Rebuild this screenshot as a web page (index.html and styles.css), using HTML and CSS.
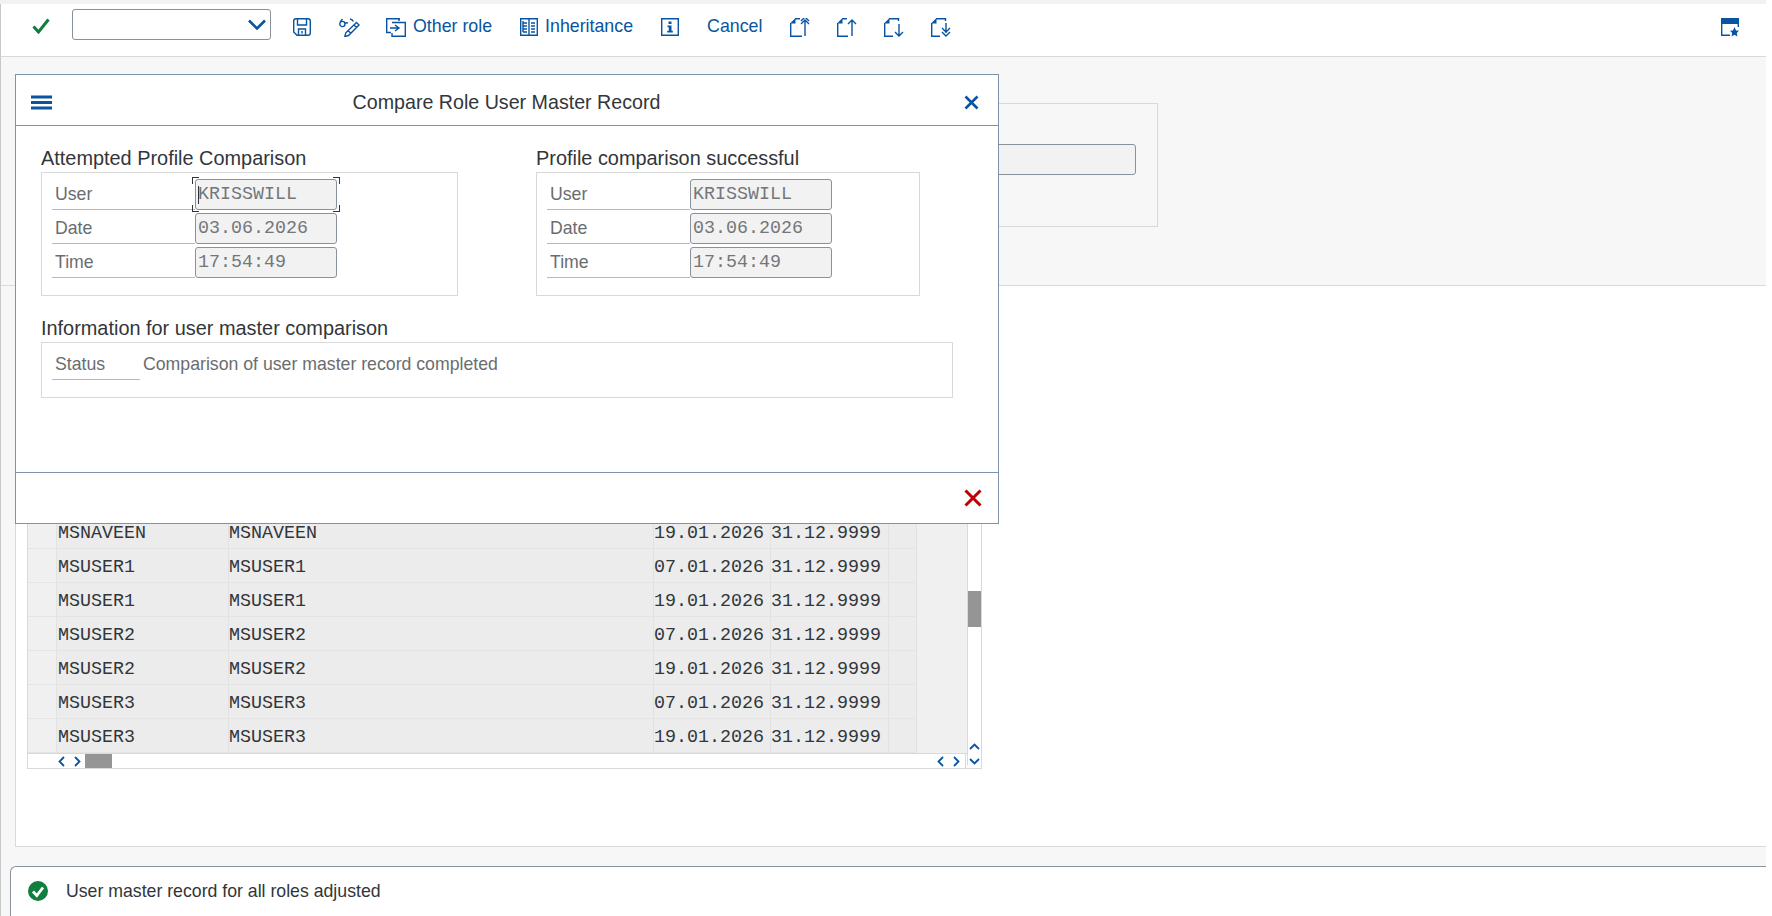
FILE: index.html
```html
<!DOCTYPE html>
<html lang="en">
<head>
    <meta charset="UTF-8">
    <title>Compare Role User Master Record</title>
    <link rel="stylesheet" href="styles.css">
</head>
<body>
    <div class="top-strip"></div>

    <div class="toolbar">
        <svg class="icon check" width="18" height="16" viewBox="0 0 18 16"><path d="M1.5 8.5 L6.5 14 L16.5 1.5"/></svg>
        <div class="dropdown">
            <svg class="icon" width="18" height="11" viewBox="0 0 18 11"><path d="M1 1.5 L9 9.5 L17 1.5" stroke-width="2.6"/></svg>
        </div>
        <svg class="icon save" width="18" height="18" viewBox="0 0 18 18"><path d="M3 .7 H15 Q17.3 .7 17.3 3 V15 Q17.3 17.3 15 17.3 H4 L.7 14 V3 Q.7 .7 3 .7 Z M4.5 1 V7 H13.5 V1 M5.5 17 V11 H12.5 V17 M9 13 V15.5"/></svg>
        <svg class="icon edit" width="21" height="19" viewBox="0 0 21 19"><path d="M3.5 1 C1.8 2.5 .8 4.5 .8 6 A2.6 2.6 0 0 0 6 6 A2.6 2.6 0 0 0 .8 6 M6 5.5 C7 4.5 8 4.5 9 5.2 M11 1 C12.5 1.2 13.8 2 14.5 3.5 M17.5 4.5 L20 7 L9.5 17.5 L5.8 18.5 L6.8 14.8 Z M15 7 L17.5 9.5 M9 12.5 L11.5 15"/></svg>
        <span class="tool-btn other-role">
            <svg class="icon" width="20" height="19" viewBox="0 0 20 19"><path d="M14 .7 H.7 V14.5 H5 M6 4.5 H19.3 V18.3 H6 V15 M13 .7 V3 M9 7 L13 10 L9 13 M4 10 H13"/></svg>
            Other role
        </span>
        <span class="tool-btn inherit">
            <svg class="icon" width="18" height="18" viewBox="0 0 18 18"><path d="M.7 .7 H17.3 V17.3 H.7 Z M9 .7 V17.3 M3 5 H7 M3 8 H7 M3 11 H7 M3 14 H7 M11 5 H15 M11 8 H15 M11 11 H15 M11 14 H15 M3 3 V14"/></svg>
            Inheritance
        </span>
        <svg class="icon info" width="18" height="18" viewBox="0 0 18 18"><path d="M.7 .7 H17.3 V17.3 H.7 Z"/><path class="solid" d="M7.5 3.5 H10.5 V6 H7.5 Z M6.5 7.5 H10.5 V12.8 H11.8 V14.5 H6.2 V12.8 H7.8 V9.2 H6.5 Z"/></svg>
        <span class="tool-btn cancel">Cancel</span>
        <div class="page-icons">
            <svg class="icon" width="21" height="19" viewBox="0 0 21 19"><path class="solid" d="M0 5.5 L5.5 0 V5.5 Z"/><path d="M.7 5 V18.3 H12 M5 .7 H10 M15 18 V3 M11 6 L15 2 L19 6 M11 3 L15 -1 L19 3"/></svg>
            <svg class="icon" width="21" height="19" viewBox="0 0 21 19"><path class="solid" d="M0 5.5 L5.5 0 V5.5 Z"/><path d="M.7 5 V18.3 H11 M5 .7 H10 M15 18 V2 M11 6 L15 2 L19 6"/></svg>
            <svg class="icon" width="21" height="19" viewBox="0 0 21 19"><path class="solid" d="M0 5.5 L5.5 0 V5.5 Z"/><path d="M.7 5 V18.3 H9 M5 .7 H14.5 V3 M15 6 V18 M11 14 L15 18 L19 14"/></svg>
            <svg class="icon" width="21" height="19" viewBox="0 0 21 19"><path class="solid" d="M0 5.5 L5.5 0 V5.5 Z"/><path d="M.7 5 V18.3 H9 M5 .7 H14.5 V3 M15 5 V15 M11 10 L15 14 L19 10 M11 14 L15 18 L19 14"/></svg>
        </div>
        <svg class="icon layout" width="18" height="19" viewBox="0 0 18 19"><path class="solid" d="M0 0 H18 V6 H0 Z M13.5 9 L15 12.5 L18 12.7 L15.8 15 L16.5 18.5 L13.5 16.7 L10.5 18.5 L11.2 15 L9 12.7 L12 12.5 Z"/><path d="M.7 3 V17.3 H9 M17.3 3 V9"/></svg>
    </div>

    <div class="main">
        <div class="header-area">
            <div class="form-box">
                <div class="form-input"></div>
            </div>
        </div>

        <div class="work-area">
            <div class="table-wrap">
                <div class="table-body">
                    <div class="rows">
                        <div class="row"><span class="sel"></span><span class="c1">MSNAVEEN</span><span class="c2">MSNAVEEN</span><span class="c3">19.01.2026</span><span class="c4">31.12.9999</span><span class="c5"></span></div>
                        <div class="row"><span class="sel"></span><span class="c1">MSUSER1</span><span class="c2">MSUSER1</span><span class="c3">07.01.2026</span><span class="c4">31.12.9999</span><span class="c5"></span></div>
                        <div class="row"><span class="sel"></span><span class="c1">MSUSER1</span><span class="c2">MSUSER1</span><span class="c3">19.01.2026</span><span class="c4">31.12.9999</span><span class="c5"></span></div>
                        <div class="row"><span class="sel"></span><span class="c1">MSUSER2</span><span class="c2">MSUSER2</span><span class="c3">07.01.2026</span><span class="c4">31.12.9999</span><span class="c5"></span></div>
                        <div class="row"><span class="sel"></span><span class="c1">MSUSER2</span><span class="c2">MSUSER2</span><span class="c3">19.01.2026</span><span class="c4">31.12.9999</span><span class="c5"></span></div>
                        <div class="row"><span class="sel"></span><span class="c1">MSUSER3</span><span class="c2">MSUSER3</span><span class="c3">07.01.2026</span><span class="c4">31.12.9999</span><span class="c5"></span></div>
                        <div class="row"><span class="sel"></span><span class="c1">MSUSER3</span><span class="c2">MSUSER3</span><span class="c3">19.01.2026</span><span class="c4">31.12.9999</span><span class="c5"></span></div>
                    </div>
                    <div class="table-blank"></div>
                    <div class="vscroll">
                        <div class="vthumb"></div>
                        <svg class="icon chev" width="11" height="7" viewBox="0 0 11 7"><path d="M1 6 L5.5 1.5 L10 6"/></svg>
                        <svg class="icon chev" width="11" height="7" viewBox="0 0 11 7"><path d="M1 1 L5.5 5.5 L10 1"/></svg>
                    </div>
                </div>
                <div class="hscroll">
                    <svg class="icon chev" width="7" height="11" viewBox="0 0 7 11"><path d="M6 1 L1.5 5.5 L6 10"/></svg>
                    <svg class="icon chev" width="7" height="11" viewBox="0 0 7 11"><path d="M1 1 L5.5 5.5 L1 10"/></svg>
                    <div class="hthumb"></div>
                    <svg class="icon chev right-first" width="7" height="11" viewBox="0 0 7 11"><path d="M6 1 L1.5 5.5 L6 10"/></svg>
                    <svg class="icon chev" width="7" height="11" viewBox="0 0 7 11"><path d="M1 1 L5.5 5.5 L1 10"/></svg>
                </div>
            </div>
        </div>

        <div class="status-bar">
            <svg class="status-icon" width="22" height="22" viewBox="0 0 22 22"><circle cx="11" cy="11" r="10" fill="#107e3e"/><path d="M6 11.5 L9.8 15.5 L16 7.5" fill="none" stroke="#fff" stroke-width="2.8"/></svg>
            <span>User master record for all roles adjusted</span>
        </div>
    </div>

    <!-- popup over the screen -->
    <div class="dialog">
        <div class="dialog-head">
            <svg class="icon menu" width="21" height="15" viewBox="0 0 21 15"><path d="M0 2 H21 M0 7.5 H21 M0 13 H21" stroke-width="3"/></svg>
            <div class="dialog-title">Compare Role User Master Record</div>
            <svg class="icon close" width="15" height="15" viewBox="0 0 15 15"><path d="M1.5 1.5 L13.5 13.5 M13.5 1.5 L1.5 13.5" stroke-width="2.6"/></svg>
        </div>

        <div class="dialog-body">
            <div class="groups">
                <div class="group group-left">
                    <h3>Attempted Profile Comparison</h3>
                    <div class="group-box">
                        <div class="field"><label>User</label><div class="value focused">KRISSWILL<i class="cursor"></i><i class="corner tl"></i><i class="corner tr"></i><i class="corner bl"></i><i class="corner br"></i></div></div>
                        <div class="field"><label>Date</label><div class="value">03.06.2026</div></div>
                        <div class="field"><label>Time</label><div class="value">17:54:49</div></div>
                    </div>
                </div>
                <div class="group group-right">
                    <h3>Profile comparison successful</h3>
                    <div class="group-box">
                        <div class="field"><label>User</label><div class="value">KRISSWILL</div></div>
                        <div class="field"><label>Date</label><div class="value">03.06.2026</div></div>
                        <div class="field"><label>Time</label><div class="value">17:54:49</div></div>
                    </div>
                </div>
            </div>

            <div class="group group-info">
                <h3>Information for user master comparison</h3>
                <div class="info-box">
                    <label>Status</label>
                    <span class="info-text">Comparison of user master record completed</span>
                </div>
            </div>
        </div>

        <div class="dialog-foot">
            <svg class="icon cancel-x" width="18" height="18" viewBox="0 0 18 18"><path d="M1.5 1.5 L16.5 16.5 M16.5 1.5 L1.5 16.5" stroke-width="3"/></svg>
        </div>
    </div>
</body>
</html>
```

FILE: styles.css
```css
* {
    box-sizing: border-box;
}

html, body {
    margin: 0;
    height: 916px;
    overflow: hidden;
}

body {
    display: flex;
    flex-direction: column;
    position: relative;
    width: 1772px;
    padding-right: 6px;
    background-color: white;
    font-family: "Liberation Sans", Arial, sans-serif;
    font-size: 17.7px;
    color: #32363a;
}

.icon {
    flex: none;
    fill: none;
    stroke: #0854a0;
    stroke-width: 1.4;
}

.icon .solid {
    fill: #0854a0;
    stroke: none;
}

/* toolbar */
.top-strip {
    flex: none;
    height: 4px;
    background-color: #f2f2f2;
}

.toolbar {
    flex: none;
    display: flex;
    align-items: center;
    height: 53px;
    padding: 0 27px 6px 32px;
    background-color: white;
    border-left: 1px solid #c8c8c8;
    border-bottom: 1px solid #d9d9d9;
    color: #0854a0;
    font-size: 17.8px;
}

.check {
    stroke: #107e3e;
    stroke-width: 3;
    margin: -2px 0 0 -1px;
}

.dropdown {
    display: flex;
    align-items: center;
    justify-content: flex-end;
    width: 199px;
    height: 31px;
    margin: 0 0 5px 22px;
    padding: 0 4px 0 0;
    background-color: white;
    border: 1px solid #89919a;
    border-radius: 3px;
}

.save {
    margin-left: 22px;
}

.edit {
    margin-left: 28px;
}

.tool-btn {
    display: flex;
    align-items: center;
    gap: 7px;
    margin-bottom: 2px;
}

.tool-btn .icon {
    margin-top: 2px;
}

.other-role {
    margin-left: 26px;
}

.inherit {
    margin-left: 28px;
}

.info {
    margin-left: 28px;
}

.cancel {
    margin-left: 28px;
}

.page-icons {
    display: flex;
    gap: 26px;
    margin-left: 28px;
}

.layout {
    margin-left: auto;
}

/* background screen */
.main {
    flex: 1;
    display: flex;
    flex-direction: column;
    background-color: #f7f7f7;
    border-left: 1px solid #c8c8c8;
}

.header-area {
    flex: none;
    height: 229px;
    padding-top: 46px;
    padding-left: 757px;
    border-bottom: 1px solid #d9d9d9;
}

.form-box {
    display: flex;
    justify-content: flex-end;
    width: 400px;
    height: 124px;
    padding: 40px 21px 0 0;
    border: 1px solid #d9d9d9;
}

.form-input {
    width: 300px;
    height: 31px;
    background-color: #f2f2f2;
    border: 1px solid #89919a;
    border-radius: 3px;
}

.work-area {
    flex: none;
    height: 561px;
    margin-left: 14px;
    padding: 229px 0 0 11px;
    background-color: white;
    border-left: 1px solid #d9d9d9;
    border-bottom: 1px solid #d9d9d9;
}

.table-wrap {
    width: 955px;
    border: 1px solid #d9d9d9;
    border-top: none;
    font-family: "Liberation Mono", monospace;
    font-size: 18.33px;
    color: #32363a;
}

.table-body {
    display: flex;
    border-bottom: 1px solid #d9d9d9;
}

.row {
    display: grid;
    grid-template-columns: 29px 172px 425px 117px 118px 28px;
    grid-template-rows: 33px;
    height: 34px;
    line-height: 37px;
    background-color: #ececec;
    border-bottom: 1px solid #e4e4e4;
}

.row span {
    border-right: 1px solid #e2e2e2;
}

.row .c1 {
    padding-left: 1px;
}

.row .sel {
    background-color: #f0f0f0;
}

.table-blank {
    width: 50px;
    background-color: #f0f0f0;
}

.vscroll {
    position: relative;
    display: flex;
    flex-direction: column;
    align-items: center;
    justify-content: flex-end;
    gap: 8px;
    flex: 1;
    margin-bottom: -12px;
    background-color: white;
    border-left: 1px solid #d9d9d9;
}

.vthumb {
    position: absolute;
    top: 76px;
    left: 0;
    right: 0;
    height: 36px;
    background-color: #959595;
}

.hscroll {
    display: flex;
    align-items: center;
    height: 14px;
    padding-left: 30px;
    gap: 9px;
    margin-right: 15px;
    border-right: 1px solid #d9d9d9;
}

.hthumb {
    width: 27px;
    height: 14px;
    margin-left: -5px;
    background-color: #959595;
}

.chev {
    stroke-width: 1.8;
}

.right-first {
    margin-left: auto;
}

.hscroll .chev:last-child {
    margin-right: 5px;
}

/* status bar */
.status-bar {
    flex: none;
    display: flex;
    align-items: center;
    gap: 17px;
    height: 50px;
    margin: 19px 0 0 9px;
    padding: 0 0 1px 16px;
    background-color: white;
    border: 1px solid #89919a;
    border-right: none;
    border-bottom: none;
    border-radius: 6px 0 0 0;
}

/* dialog */
.dialog {
    position: absolute;
    top: 74px;
    left: 15px;
    display: flex;
    flex-direction: column;
    width: 984px;
    height: 450px;
    background-color: white;
    border: 1px solid #7c93aa;
}

.dialog-head {
    flex: none;
    display: flex;
    align-items: center;
    height: 51px;
    padding: 4px 19px 0 15px;
    border-bottom: 1px solid #7c93aa;
}

.dialog-title {
    flex: 1;
    padding-right: 3px;
    text-align: center;
    font-size: 19.65px;
    color: #32363a;
}

.dialog-body {
    flex: 1;
    padding: 19px 0 0 25px;
}

.groups {
    display: flex;
}

.group h3 {
    margin: 0;
    height: 27px;
    line-height: 27px;
    font-size: 19.9px;
    font-weight: normal;
    color: #32363a;
}

.group-left {
    width: 495px;
}

.group-box {
    height: 124px;
    padding: 6px 0 0 10px;
    border: 1px solid #d9d9d9;
}

.group-left .group-box {
    width: 417px;
}

.group-right .group-box {
    width: 384px;
}

.field {
    display: grid;
    grid-template-columns: 143px 142px;
    grid-template-rows: 31px;
    height: 31px;
    margin-bottom: 3px;
}

.field label,
.info-box label {
    padding-left: 3px;
    line-height: 31px;
    color: #6a6d70;
    border-bottom: 1px solid #b5b9bd;
}

.value {
    position: relative;
    padding-left: 2px;
    line-height: 30px;
    font-family: "Liberation Mono", monospace;
    font-size: 18.33px;
    color: #74777a;
    background-color: #f2f2f2;
    border: 1px solid #89919a;
    border-radius: 3px;
}

.cursor {
    position: absolute;
    top: 6px;
    left: 2px;
    width: 1px;
    height: 18px;
    background-color: #32363a;
}

.corner {
    position: absolute;
    width: 7px;
    height: 7px;
    border: 0 solid #32363a;
}

.tl { top: -3px; left: -4px; border-width: 1px 0 0 1px; }
.tr { top: -3px; right: -4px; border-width: 1px 1px 0 0; }
.bl { bottom: -3px; left: -4px; border-width: 0 0 1px 1px; }
.br { bottom: -3px; right: -4px; border-width: 0 1px 1px 0; }

.group-info {
    margin-top: 19px;
}

.info-box {
    display: flex;
    align-items: flex-start;
    width: 912px;
    height: 56px;
    padding: 7px 0 0 10px;
    border: 1px solid #d9d9d9;
}

.info-box label {
    width: 88px;
    height: 30px;
    line-height: 29px;
}

.info-text {
    margin-left: 3px;
    line-height: 29px;
    color: #6a6d70;
}

.dialog-foot {
    flex: none;
    display: flex;
    align-items: center;
    justify-content: flex-end;
    height: 51px;
    padding: 0 16px 0 0;
    border-top: 1px solid #7c93aa;
}

.cancel-x {
    stroke: #bb0000;
}
```
